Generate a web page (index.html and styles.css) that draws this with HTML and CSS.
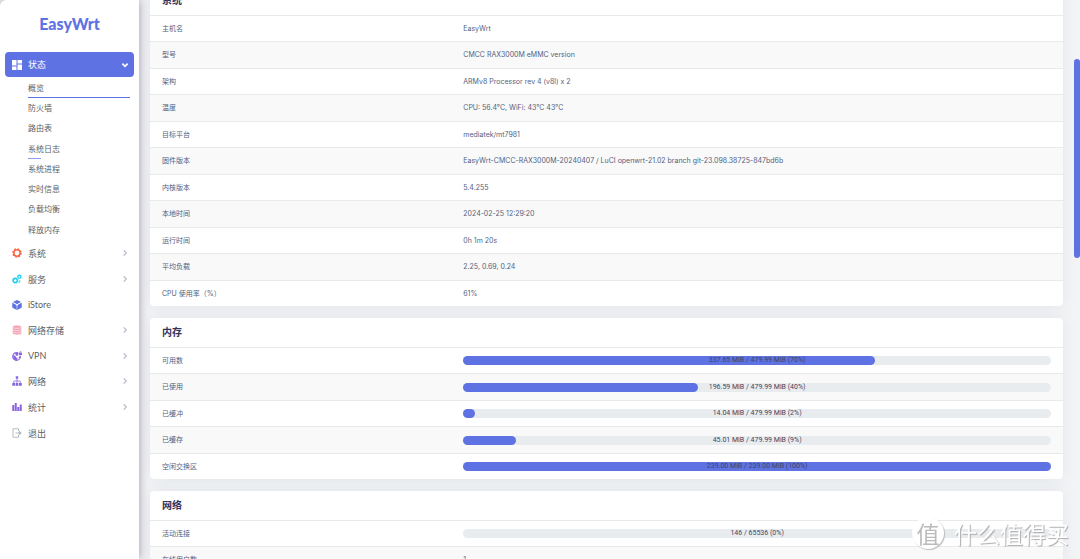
FILE: index.html
```html
<!DOCTYPE html>
<html lang="zh-CN">
<head>
<meta charset="utf-8">
<title>EasyWrt</title>
<link rel="stylesheet" href="styles.css">
</head>
<body>
<div class="shell">
  <aside class="sidebar">
    <a class="brand" href="#">EasyWrt</a>
    <nav>
      <ul class="menu">
        <li>
          <a class="item active" href="#">
            <svg class="icon" viewBox="0 0 20 20" fill="currentColor"><path d="M0 0h9v11H0zM11 0h9v7h-9zM0 13h9v7H0zM11 9h9v11h-9z"/></svg>
            <span>状态</span>
            <svg class="caret" viewBox="0 0 12 12" fill="none" stroke="currentColor" stroke-width="2.6"><path d="M2 4l4 4 4-4"/></svg>
          </a>
          <ul class="submenu">
            <li><a class="current" href="#">概览</a></li>
            <li><a href="#">防火墙</a></li>
            <li><a href="#">路由表</a></li>
            <li><a class="hover" href="#">系统日志</a></li>
            <li><a href="#">系统进程</a></li>
            <li><a href="#">实时信息</a></li>
            <li><a href="#">负载均衡</a></li>
            <li><a href="#">释放内存</a></li>
          </ul>
        </li>
        <li><a class="item" href="#">
          <svg class="icon orange" viewBox="0 0 20 20" fill="none" stroke="currentColor"><circle cx="10" cy="10" r="6.3" stroke-width="3"/><circle cx="10" cy="10" r="8.3" stroke-width="2.6" stroke-dasharray="3.26 3.26"/></svg>
          <span>系统</span>
          <svg class="caret" viewBox="0 0 12 12" fill="none" stroke="currentColor" stroke-width="1.8"><path d="M4 2l4 4-4 4"/></svg></a></li>
        <li><a class="item" href="#">
          <svg class="icon cyan" viewBox="0 0 20 20" fill="none" stroke="currentColor"><circle cx="6.500" cy="13" r="4" stroke-width="2.800"/><circle cx="6.500" cy="13" r="5.500" stroke-width="1.500" stroke-dasharray="2.160 2.160"/><circle cx="14.800" cy="5.500" r="3" stroke-width="2.200"/><circle cx="14.800" cy="5.500" r="4.200" stroke-width="1.200" stroke-dasharray="1.650 1.650"/><path d="M15.500 12.500v3l-2.500 2.500" stroke-width="2"/></svg>
          <span>服务</span>
          <svg class="caret" viewBox="0 0 12 12" fill="none" stroke="currentColor" stroke-width="1.8"><path d="M4 2l4 4-4 4"/></svg></a></li>
        <li><a class="item short" href="#">
          <svg class="icon blue" viewBox="0 0 20 20" fill="currentColor"><path d="M10 0l8 4-8 4.500L2 4zM0.500 5.500L9.500 10v10l-9-5zM19.500 5.500L10.500 10v10l9-5z"/><path d="M10 9.500V13M10 9.500L6 7M10 9.500L14 7" stroke="#fff" stroke-width="1.500"/></svg>
          <span>iStore</span></a></li>
        <li><a class="item" href="#">
          <svg class="icon pink" viewBox="0 0 20 20" fill="currentColor"><path d="M1.500 3c0-3 17-3 17 0v14c0 3-17 3-17 0z"/><path d="M2 5c2 2.500 14 2.500 16 0M2 9.500c2 2.500 14 2.500 16 0M2 14c2 2.500 14 2.500 16 0" fill="none" stroke="#fff" stroke-width="1"/></svg>
          <span>网络存储</span>
          <svg class="caret" viewBox="0 0 12 12" fill="none" stroke="currentColor" stroke-width="1.8"><path d="M4 2l4 4-4 4"/></svg></a></li>
        <li><a class="item short" href="#">
          <svg class="icon violet" viewBox="0 0 20 20"><circle cx="9" cy="11" r="7.700" fill="none" stroke="currentColor" stroke-width="2.200"/><path d="M2 8l5 2 1 3 3 1-1 4-3 1-4-4zM7 4l5 0 1 4-3 2-3-2zM14 11l3 0-1 4-3-1z" fill="currentColor"/><path d="M13 0h7v9h-7z" fill="#fff"/><path d="M14 3.500h6V8h-6z" fill="currentColor"/><path d="M15.500 4V2.500a1.500 1.500 0 0 1 3 0V4" fill="none" stroke="currentColor" stroke-width="1.200"/></svg>
          <span>VPN</span>
          <svg class="caret" viewBox="0 0 12 12" fill="none" stroke="currentColor" stroke-width="1.8"><path d="M4 2l4 4-4 4"/></svg></a></li>
        <li><a class="item" href="#">
          <svg class="icon violet" viewBox="0 0 20 20" fill="currentColor"><path d="M7.500 0.500h5v5h-5zM0.500 14h5.500v5.500H0.500zM7.250 14h5.500v5.500h-5.500zM14 14h5.500v5.500H14z"/><path d="M10 5v9M3.500 14v-4h13v4" fill="none" stroke="currentColor" stroke-width="1.500"/></svg>
          <span>网络</span>
          <svg class="caret" viewBox="0 0 12 12" fill="none" stroke="currentColor" stroke-width="1.8"><path d="M4 2l4 4-4 4"/></svg></a></li>
        <li><a class="item" href="#">
          <svg class="icon violet" viewBox="0 0 20 20" fill="currentColor"><path d="M0.500 6h4v12h-4zM5.500 2h4v16h-4zM10.500 10h4v8h-4zM15.500 5h4v13h-4z"/></svg>
          <span>统计</span>
          <svg class="caret" viewBox="0 0 12 12" fill="none" stroke="currentColor" stroke-width="1.8"><path d="M4 2l4 4-4 4"/></svg></a></li>
        <li><a class="item" href="#">
          <svg class="icon gray" viewBox="0 0 20 20" fill="none" stroke="currentColor" stroke-width="1.800"><path d="M13 6V1.500H2v17h11V14M7 10h11"/><path d="M14.500 6.500L18.500 10l-4 3.500z" fill="currentColor"/></svg>
          <span>退出</span></a></li>
      </ul>
    </nav>
  </aside>

  <main class="content">
    <section class="card">
      <h2>系统</h2>
      <table>
        <tr><th scope="row">主机名</th><td>EasyWrt</td></tr>
        <tr><th scope="row">型号</th><td>CMCC RAX3000M eMMC version</td></tr>
        <tr><th scope="row">架构</th><td>ARMv8 Processor rev 4 (v8l) x 2</td></tr>
        <tr><th scope="row">温度</th><td>CPU: 56.4°C, WiFi: 43°C 43°C</td></tr>
        <tr><th scope="row">目标平台</th><td>mediatek/mt7981</td></tr>
        <tr><th scope="row">固件版本</th><td>EasyWrt-CMCC-RAX3000M-20240407 / LuCI openwrt-21.02 branch git-23.098.38725-847bd6b</td></tr>
        <tr><th scope="row">内核版本</th><td>5.4.255</td></tr>
        <tr><th scope="row">本地时间</th><td>2024-02-25 12:29:20</td></tr>
        <tr><th scope="row">运行时间</th><td>0h 1m 20s</td></tr>
        <tr><th scope="row">平均负载</th><td>2.25, 0.69, 0.24</td></tr>
        <tr><th scope="row">CPU 使用率（%）</th><td>61%</td></tr>
      </table>
    </section>
    <section class="card">
      <h2>内存</h2>
      <table>
        <tr><th scope="row">可用数</th><td><div class="bar"><div class="fill" style="width:70%"></div><span>337.65 MiB / 479.99 MiB (70%)</span></div></td></tr>
        <tr><th scope="row">已使用</th><td><div class="bar"><div class="fill" style="width:40%"></div><span>196.59 MiB / 479.99 MiB (40%)</span></div></td></tr>
        <tr><th scope="row">已缓冲</th><td><div class="bar"><div class="fill" style="width:2%"></div><span>14.04 MiB / 479.99 MiB (2%)</span></div></td></tr>
        <tr><th scope="row">已缓存</th><td><div class="bar"><div class="fill" style="width:9%"></div><span>45.01 MiB / 479.99 MiB (9%)</span></div></td></tr>
        <tr><th scope="row">空闲交换区</th><td><div class="bar"><div class="fill" style="width:100%"></div><span>239.00 MiB / 239.00 MiB (100%)</span></div></td></tr>
      </table>
    </section>
    <section class="card">
      <h2>网络</h2>
      <table>
        <tr><th scope="row">活动连接</th><td><div class="bar"><div class="fill" style="width:0%"></div><span>146 / 65536 (0%)</span></div></td></tr>
        <tr><th scope="row">在线用户数</th><td>1</td></tr>
      </table>
    </section>
  </main>
</div>
<div class="scroll-thumb"></div>
<div class="watermark"><span class="seal">值</span><span>什么值得买</span></div>
</body>
</html>
```
FILE: styles.css
```css
* { box-sizing: border-box; }
body {
  margin: 0;
  height: 100vh;
  overflow: hidden;
  background: #f3f4f6;
  font-family: Inter, "Noto Sans CJK SC", sans-serif;
  color: #525f7f;
}
ul { list-style: none; margin: 0; padding: 0; }
a { color: inherit; text-decoration: none; }
.shell { display: flex; height: 100vh; overflow: hidden; }

.sidebar {
  flex: none;
  width: 139px;
  padding: 0 5px;
  background: #fff;
  border-top-left-radius: 6px;
  box-shadow: 0 0 10px rgba(60, 65, 80, 0.5);
  z-index: 1;
}
.brand {
  display: block;
  height: 52px;
  line-height: 48px;
  text-align: center;
  font-family: Lato, sans-serif;
  font-size: 16px;
  font-weight: 900;
  color: #5e72e4;
}
.item {
  display: flex;
  align-items: center;
  height: 26px;
  padding: 0 5px 0 7px;
  font-family: Lato, "Noto Sans CJK SC", sans-serif;
  font-size: 9px;
  color: #5c5f66;
}
.short { height: 25px; }
.active {
  height: 25px;
  background: #5e72e4;
  color: #fff;
  border-radius: 4px;
}
.icon { width: 10px; height: 10px; margin-right: 6px; }
.caret { width: 8px; height: 8px; margin-left: auto; color: #b4bcc8; }
.active .caret { color: #fff; }
.orange { color: #fb6340; }
.cyan { color: #11cdef; }
.blue { color: #5e72e4; }
.pink { color: #f3a4b5; }
.violet { color: #8965e0; }
.gray { color: #adb5bd; }

.submenu { padding: 1px 4px 0 23px; font-size: 8px; color: #5c5f66; }
.submenu a { display: block; height: 20px; line-height: 20px; }
.submenu li:nth-child(4n + 3) a { height: 21px; }
.submenu .current { border-bottom: 1px solid #5e72e4; }
.submenu .hover::after {
  content: "";
  display: block;
  width: 13px;
  height: 1px;
  margin-top: -1px;
  background: #8f9bf0;
}

.content { flex: 1; min-width: 0; margin-top: -14px; padding: 0 17px 0 11px; }
.card {
  margin-bottom: 12px;
  background: #fff;
  border-radius: 4px;
  box-shadow: 0 0 16px rgba(136, 152, 170, 0.15);
  overflow: hidden;
}
.card h2 {
  margin: 0;
  height: 29px;
  line-height: 28px;
  padding: 0 12px;
  font-size: 10px;
  font-weight: 700;
  color: #32325d;
}
table { width: 100%; border-collapse: separate; border-spacing: 0; table-layout: fixed; }
th, td {
  height: 26px;
  padding: 0 12px;
  border-top: 1px solid #e7e9eb;
  font-size: 7px;
  line-height: 12px;
  font-weight: 400;
  text-align: left;
}
th { width: 33%; }
tr:nth-child(even) > * { height: 27px; background: #f9f9f9; }
.bar {
  position: relative;
  height: 9px;
  border-radius: 5px;
  background: #e9ecef;
  text-align: center;
  line-height: 9px;
}
.fill { height: 9px; border-radius: 5px; background: #5e72e4; }
.bar span { position: absolute; inset: 0; font-family: Roboto, sans-serif; color: #3d4468; }

.scroll-thumb {
  position: fixed;
  top: 59px;
  right: 0;
  width: 6px;
  height: 199px;
  border-radius: 3px;
  background: #5e72e4;
}
.watermark {
  position: fixed;
  right: 11px;
  bottom: 10px;
  display: flex;
  align-items: center;
  gap: 10px;
  font-family: "Noto Sans CJK SC", sans-serif;
  font-size: 23px;
  line-height: 32px;
  color: #fff;
  text-shadow: 1px 1px 1px #aaa;
}
.seal {
  width: 32px;
  height: 32px;
  border-radius: 50%;
  background: #fff;
  color: #bbb;
  text-align: center;
  text-shadow: none;
  box-shadow: 1px 1px 1px #bbb;
}
```
